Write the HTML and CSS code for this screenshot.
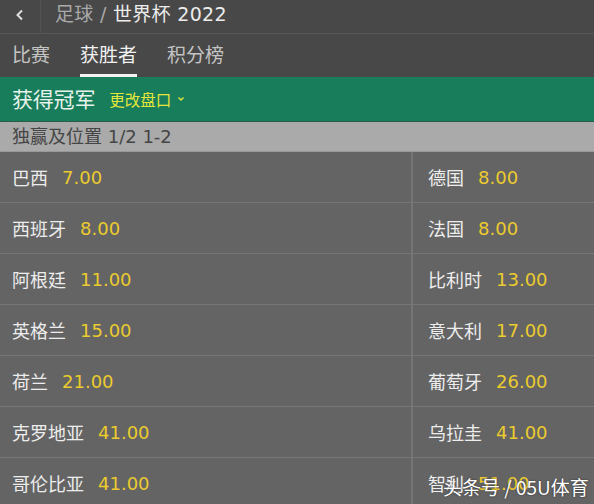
FILE: index.html
```html
<!DOCTYPE html>
<html lang="zh">
<head>
<meta charset="utf-8">
<title>世界杯 2022</title>
<link rel="stylesheet" href="styles.css">
</head>
<body>
<div class="page">
  <header class="topbar">
    <div class="back">
      <svg width="10" height="12" viewBox="0 0 10 12"><polyline points="7,1.5 2.5,6 7,10.5" fill="none" stroke="#e0e0e0" stroke-width="2"/></svg>
    </div>
    <div class="title"><span class="crumb">足球 /</span> <span class="current">世界杯 2022</span></div>
  </header>
  <nav class="tabs">
    <span class="tab">比赛</span>
    <span class="tab active">获胜者</span>
    <span class="tab">积分榜</span>
  </nav>
  <div class="market">
    <span class="market-name">获得冠军</span>
    <span class="change">更改盘口
      <svg width="8" height="6" viewBox="0 0 8 6"><polyline points="1.5,1.5 4,4 6.5,1.5" fill="none" stroke="#e4e63a" stroke-width="1.4"/></svg>
    </span>
  </div>
  <div class="subhead">独赢及位置 1/2 1-2</div>
  <div class="board">
    <div class="cell"><span class="team">巴西</span><span class="odds">7.00</span></div>
    <div class="cell right"><span class="team">德国</span><span class="odds">8.00</span></div>
    <div class="cell"><span class="team">西班牙</span><span class="odds">8.00</span></div>
    <div class="cell right"><span class="team">法国</span><span class="odds">8.00</span></div>
    <div class="cell"><span class="team">阿根廷</span><span class="odds">11.00</span></div>
    <div class="cell right"><span class="team">比利时</span><span class="odds">13.00</span></div>
    <div class="cell"><span class="team">英格兰</span><span class="odds">15.00</span></div>
    <div class="cell right"><span class="team">意大利</span><span class="odds">17.00</span></div>
    <div class="cell"><span class="team">荷兰</span><span class="odds">21.00</span></div>
    <div class="cell right"><span class="team">葡萄牙</span><span class="odds">26.00</span></div>
    <div class="cell"><span class="team">克罗地亚</span><span class="odds">41.00</span></div>
    <div class="cell right"><span class="team">乌拉圭</span><span class="odds">41.00</span></div>
    <div class="cell"><span class="team">哥伦比亚</span><span class="odds">41.00</span></div>
    <div class="cell right"><span class="team">智利</span><span class="odds">51.00</span></div>
  </div>
  <div class="watermark">头条号 / 05U体育</div>
</div>
</body>
</html>
```
FILE: styles.css
```css
* { box-sizing: border-box; }
html, body {
  margin: 0;
  padding: 0;
  background: #646464;
}
body {
  font-family: "DejaVu Sans", "Noto Sans CJK SC", sans-serif;
  width: 594px;
  height: 504px;
  overflow: hidden;
}
.page {
  position: relative;
  width: 594px;
}
.topbar {
  display: flex;
  align-items: center;
  height: 34px;
  background: #484848;
  border-bottom: 1px solid #575757;
}
.back {
  width: 41px;
  height: 33px;
  display: flex;
  align-items: center;
  padding-left: 15px;
  padding-bottom: 4px;
  border-right: 1px solid #535353;
}
.title {
  padding-left: 14px;
  padding-bottom: 4px;
  font-size: 19px;
  line-height: 29px;
  letter-spacing: 0.3px;
}
.crumb { color: #a9a9a9; }
.current { color: #ececec; }
.tabs {
  display: flex;
  height: 43px;
  background: #484848;
  padding-left: 12px;
  gap: 30px;
}
.tab {
  font-size: 19px;
  line-height: 42px;
  color: #c4c4c4;
  border-bottom: 3px solid transparent;
  height: 43px;
}
.tab.active {
  color: #f2f2f2;
  border-bottom-color: #f2f2f2;
}
.market {
  display: flex;
  align-items: center;
  height: 45px;
  background: #177d5b;
  border-bottom: 1px solid #2b5c48;
  padding-left: 12px;
  padding-bottom: 2px;
  gap: 14px;
}
.market-name {
  font-size: 21px;
  color: #e6f2ea;
  letter-spacing: -0.2px;
}
.change {
  display: flex;
  align-items: center;
  gap: 6px;
  font-size: 15.5px;
  color: #e4e63a;
  padding-top: 2px;
}
.subhead {
  height: 30px;
  background: #aaaaaa;
  color: #454545;
  font-size: 18px;
  line-height: 29px;
  padding-left: 12px;
  border-bottom: 1px solid #999;
}
.board {
  display: grid;
  grid-template-columns: 411px 1fr;
  column-gap: 2px;
  row-gap: 1px;
  background: #767676;
}
.cell {
  height: 50px;
  background: #646464;
  display: flex;
  align-items: center;
  padding-left: 12px;
  gap: 14px;
  font-size: 18px;
}
.cell.right { padding-left: 15px; }
.team { color: #ededed; }
.odds { color: #ebcb2e; }
.watermark {
  position: absolute;
  left: 443px;
  top: 473px;
  font-size: 19px;
  color: #ffffff;
  text-shadow: 0 0 2px rgba(0,0,0,0.6);
  font-family: "Noto Sans CJK SC", sans-serif;
}
```
